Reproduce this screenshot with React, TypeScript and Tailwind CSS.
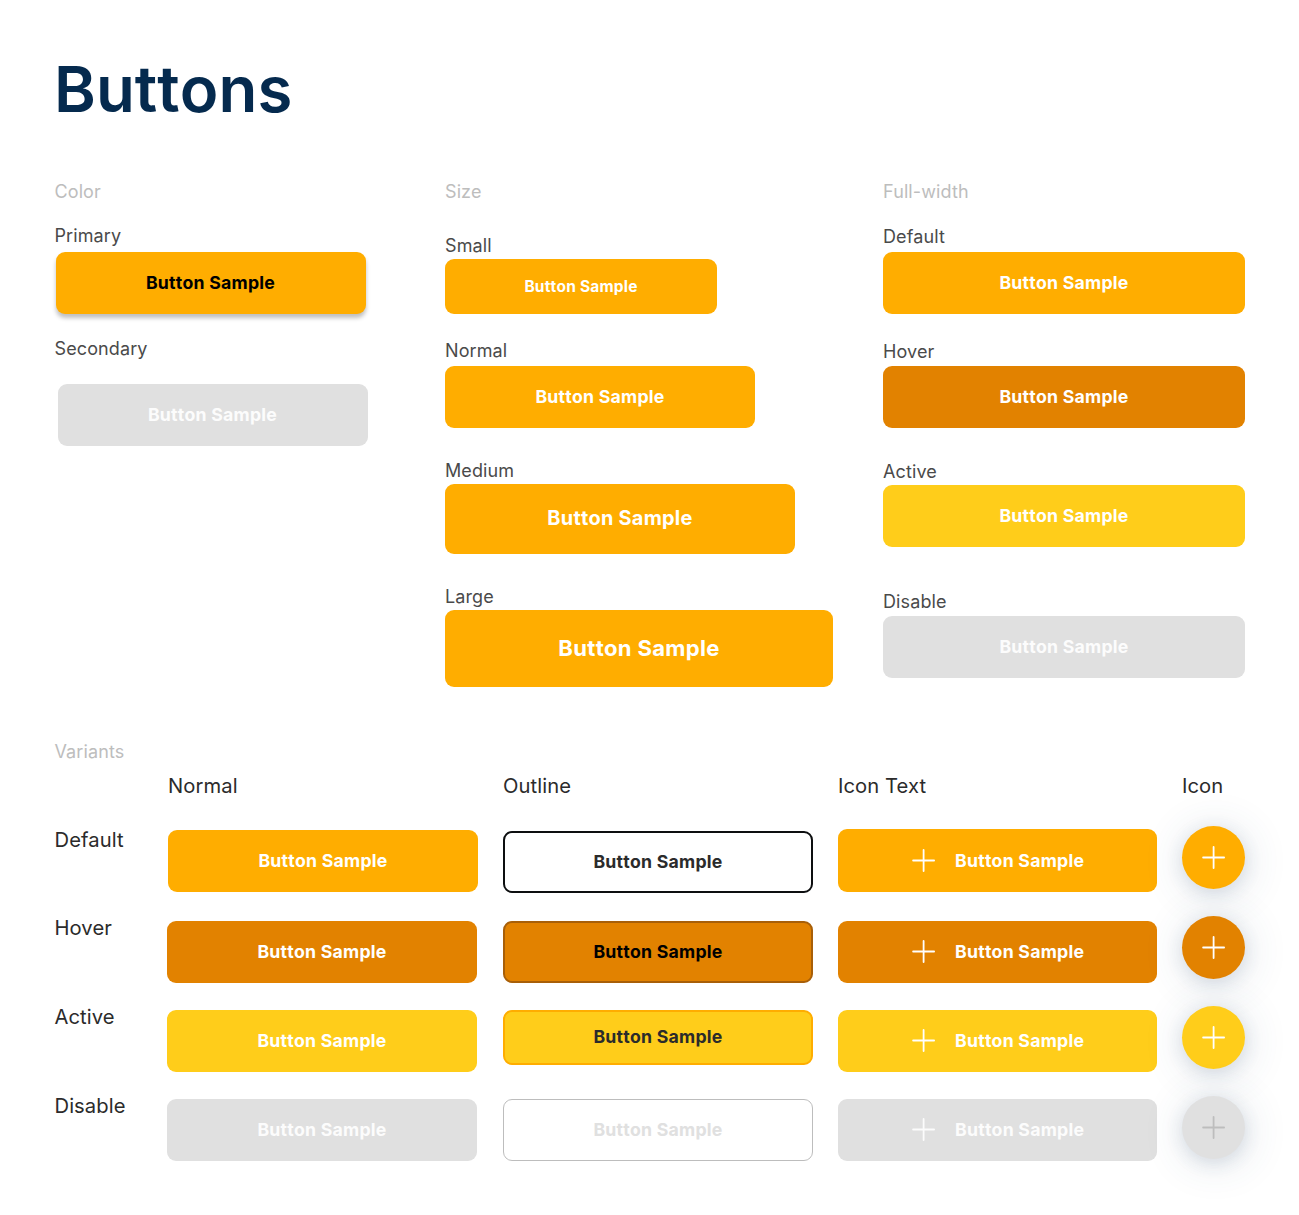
import type { ReactNode } from "react";

const fill = {
  primary: "bg-[#ffad00] text-white",
  hover: "bg-[#e28200] text-white",
  active: "bg-[#ffcd1a] text-white",
  disabled: "bg-[#e0e0e0] text-[#fcfcfc]",
};

function SampleButton({ className }: { className: string }) {
  return (
    <button className={`flex shrink-0 items-center justify-center rounded-[9px] font-bold tracking-[0.013em] whitespace-nowrap [font-kerning:none] ${className}`}>
      Button Sample
    </button>
  );
}

function Plus({ className = "" }: { className?: string }) {
  return (
    <svg viewBox="0 0 24 24" className={`size-6 shrink-0 ${className}`} fill="none" stroke="currentColor" strokeWidth="1.8" strokeLinecap="round">
      <path d="M11.6 1v21M1.1 11.5h21" />
    </svg>
  );
}

function IconTextButton({ className }: { className: string }) {
  return (
    <button className={`flex w-[319px] shrink-0 items-center rounded-[9px] pl-[73.5px] text-[17.7px] font-bold tracking-[0.013em] whitespace-nowrap [font-kerning:none] ${className}`}>
      <Plus />
      <span className="ml-[19.5px]">Button Sample</span>
    </button>
  );
}

function IconButton({ className }: { className: string }) {
  return (
    <button className={`flex size-[63px] shrink-0 items-center justify-center rounded-full shadow-[0px_4px_18px_rgba(50,80,110,0.14),2px_4px_44px_rgba(50,80,110,0.16)] ${className}`}>
      <Plus />
    </button>
  );
}

function Section({ children }: { children: ReactNode }) {
  return <h2 className="h-5 text-[18px] leading-5 tracking-[0.006em] text-[#bdbdbd]">{children}</h2>;
}

function Label({ className, children }: { className: string; children: ReactNode }) {
  return <p className={`h-5 text-[18px] leading-5 tracking-[0.006em] text-[#4a4a4a] ${className}`}>{children}</p>;
}

function Heading({ className = "", children }: { className?: string; children: ReactNode }) {
  return <p className={`h-6 text-[20.2px] leading-6 tracking-[0.004em] whitespace-nowrap text-[#2b2b2b] ${className}`}>{children}</p>;
}

export default function App() {
  return (
    <main className="h-[1215px] w-[1299px] overflow-hidden bg-white pl-[54.5px] font-['Inter',sans-serif]">
      <h1 className="-ml-[0.5px] h-20 pt-[49px] text-[63.5px] leading-[80px] font-semibold tracking-[0.001em] text-[#052a4e] [font-kerning:none]">Buttons</h1>

      <div className="mt-[102px] flex h-[560px]">
        <section className="flex w-[390.5px] flex-col items-start">
          <Section>Color</Section>
          <Label className="mt-6">Primary</Label>
          <SampleButton className="mt-1.5 ml-px h-[62px] w-[310px] bg-[#ffad00] text-[17.7px] text-black shadow-[0_4px_4px_rgba(0,0,0,0.25)]" />
          <Label className="mt-[25px]">Secondary</Label>
          <SampleButton className={`mt-[25px] ml-[3px] h-[62px] w-[310px] text-[17.7px] ${fill.disabled}`} />
        </section>

        <section className="flex w-[438px] flex-col items-start">
          <Section>Size</Section>
          <Label className="mt-[34px]">Small</Label>
          <SampleButton className={`mt-[3px] h-[55px] w-[272px] text-[15.5px] ${fill.primary}`} />
          <Label className="mt-[27px]">Normal</Label>
          <SampleButton className={`mt-[5px] h-[62px] w-[310px] text-[17.7px] ${fill.primary}`} />
          <Label className="mt-[33px]">Medium</Label>
          <SampleButton className={`mt-[3px] h-[70px] w-[350px] text-[19.9px] ${fill.primary}`} />
          <Label className="mt-[33px]">Large</Label>
          <SampleButton className={`mt-[3px] h-[77px] w-[388px] text-[22.1px] ${fill.primary}`} />
        </section>

        <section className="flex w-[362px] flex-col">
          <Section>Full-width</Section>
          <Label className="mt-[25px]">Default</Label>
          <SampleButton className={`mt-[5px] h-[62px] text-[17.7px] ${fill.primary}`} />
          <Label className="mt-[28px]">Hover</Label>
          <SampleButton className={`mt-1 h-[62px] text-[17.7px] ${fill.hover}`} />
          <Label className="mt-[34px]">Active</Label>
          <SampleButton className={`mt-[3px] h-[62px] text-[17.7px] ${fill.active}`} />
          <Label className="mt-[45px]">Disable</Label>
          <SampleButton className={`mt-1 h-[62px] text-[17.7px] ${fill.disabled}`} />
        </section>
      </div>

      <Section>Variants</Section>

      <div className="mt-3 flex items-start">
        <div className="flex w-[113.5px] flex-col pt-[54px]">
          <Heading>Default</Heading>
          <Heading className="mt-16">Hover</Heading>
          <Heading className="mt-[65px]">Active</Heading>
          <Heading className="mt-[65px]">Disable</Heading>
        </div>

        <div className="flex w-[335px] flex-col items-start text-[17.7px]">
          <Heading>Normal</Heading>
          <SampleButton className={`mt-8 h-[62px] w-[310px] ${fill.primary}`} />
          <SampleButton className={`mt-[29px] -ml-px h-[62px] w-[310px] ${fill.hover}`} />
          <SampleButton className={`mt-[27px] -ml-px h-[62px] w-[310px] ${fill.active}`} />
          <SampleButton className={`mt-[27px] -ml-px h-[62px] w-[310px] ${fill.disabled}`} />
        </div>

        <div className="flex w-[335px] flex-col items-start text-[17.7px]">
          <Heading>Outline</Heading>
          <SampleButton className="mt-[33px] h-[62px] w-[310px] border-2 border-[#0d0f10] bg-white text-[#2b2b2b]" />
          <SampleButton className="mt-7 h-[62px] w-[310px] border-2 border-[#a85f08] bg-[#e28200] text-black" />
          <SampleButton className="mt-[27px] h-[55px] w-[310px] border-2 border-[#ffad00] bg-[#ffcd1a] text-[#2b2b2b]" />
          <SampleButton className="mt-[34px] h-[62px] w-[310px] border border-[#bdbdbd] bg-white text-[#e0e0e0]" />
        </div>

        <div className="flex w-[344px] flex-col items-start">
          <Heading>Icon Text</Heading>
          <IconTextButton className={`mt-[31px] h-[63px] pt-px ${fill.primary}`} />
          <IconTextButton className={`mt-[29px] h-[62px] ${fill.hover}`} />
          <IconTextButton className={`mt-[27px] h-[62px] ${fill.active}`} />
          <IconTextButton className={`mt-[27px] h-[62px] ${fill.disabled}`} />
        </div>

        <div className="flex flex-col items-start">
          <Heading>Icon</Heading>
          <IconButton className={`mt-7 ${fill.primary}`} />
          <IconButton className={`mt-[27px] ${fill.hover}`} />
          <IconButton className={`mt-[27px] ${fill.active}`} />
          <IconButton className="mt-[27px] bg-[#e0e0e0] text-[#bdbdbd]" />
        </div>
      </div>
    </main>
  );
}
